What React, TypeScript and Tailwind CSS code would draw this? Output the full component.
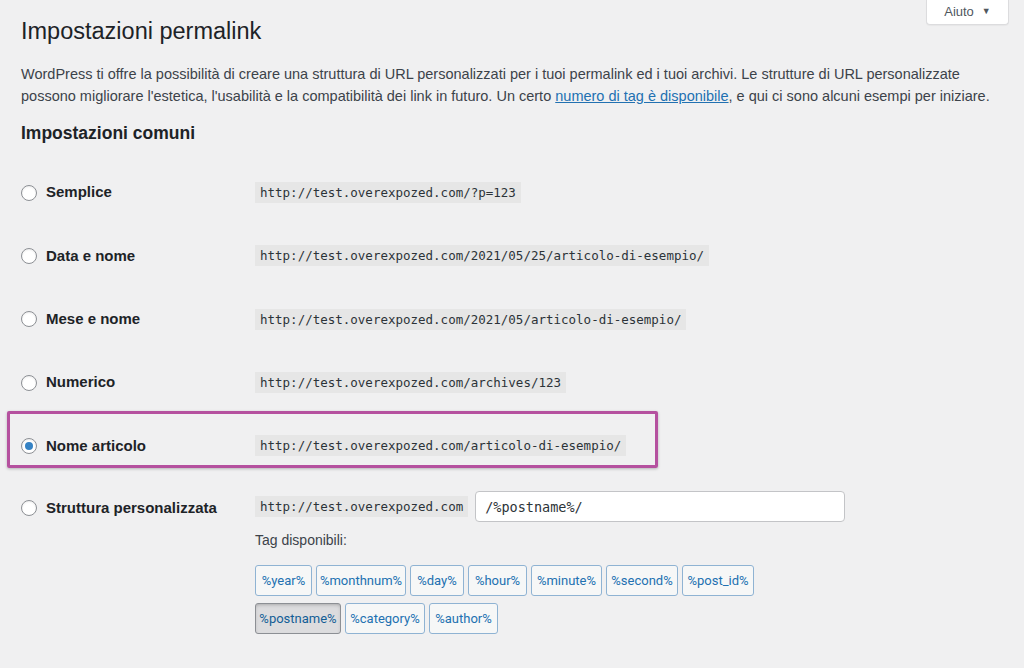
import React from "react";

const sans = { fontFamily: '"Liberation Sans", Arial, sans-serif' };

function Radio({ checked }: { checked?: boolean }) {
  return (
    <span className="flex h-[16px] w-[16px] shrink-0 items-center justify-center rounded-full border border-[#8c8f94] bg-white shadow-[inset_0_1px_2px_rgba(0,0,0,0.08)]">
      {checked && <span className="h-[8px] w-[8px] rounded-full bg-[#3582c4]" />}
    </span>
  );
}

function Code({ children }: { children: React.ReactNode }) {
  return (
    <code className="bg-[#e6e6e6] px-[5px] py-[2px] font-['DejaVu_Sans_Mono',monospace] text-[12.5px] leading-[17px] text-[#2c3338]">
      {children}
    </code>
  );
}

function Row({
  label,
  url,
  checked,
  highlight,
}: {
  label: string;
  url: string;
  checked?: boolean;
  highlight?: boolean;
}) {
  return (
    <div className="relative flex h-[63.3px] items-center">
      {highlight && (
        <div className="pointer-events-none absolute left-[-14px] top-[-3px] h-[57px] w-[651px] rounded-[2px] border-[3px] border-[#b5519f] shadow-[0_1px_3px_rgba(0,0,0,0.25)]" />
      )}
      <div className="flex w-[234px] items-center gap-[9px]">
        <Radio checked={checked} />
        <span className="text-[15px] font-bold text-[#1d2327]">{label}</span>
      </div>
      <Code>{url}</Code>
    </div>
  );
}

const tags1: [string, string][] = [
  ["%year%", "w-[57px]"],
  ["%monthnum%", "w-[90px]"],
  ["%day%", "w-[54px]"],
  ["%hour%", "w-[59px]"],
  ["%minute%", "w-[71px]"],
  ["%second%", "w-[72px]"],
  ["%post_id%", "w-[72px]"],
];
const tags2: [string, string][] = [
  ["%postname%", "w-[86px]"],
  ["%category%", "w-[80px]"],
  ["%author%", "w-[69px]"],
];

function Tag({ t, w, pressed }: { t: string; w: string; pressed?: boolean }) {
  return (
    <span
      className={`flex h-[31px] items-center justify-center rounded-[3px] border font-['Roboto',sans-serif] text-[13px] ${w} ${
        pressed
          ? "border-[#8c8f94] bg-[#dcdcde] text-[#135e96] shadow-[inset_0_2px_5px_-3px_rgba(0,0,0,0.5)]"
          : "border-[#8fb3d3] bg-[#f6f7f7] text-[#2271b1]"
      }`}
    >
      {t}
    </span>
  );
}

export default function App() {
  return (
    <div className="min-h-[668px] w-[1024px] bg-[#f0f0f1] text-[#1d2327]" style={sans}>
      <div className="flex items-start justify-between pl-[21px] pr-[15px]">
        <h1 className="pt-[17px] text-[23.5px] font-normal leading-[29px] text-[#1d2327]">
          Impostazioni permalink
        </h1>
        <div className="flex h-[25px] w-[83px] items-center justify-center gap-[8px] rounded-b-[4px] border border-t-0 border-[#dcdcde] bg-white text-[13px] text-[#50575e] shadow-[0_1px_1px_rgba(0,0,0,0.04)]">
          <span>Aiuto</span>
          <span className="text-[9px]">▼</span>
        </div>
      </div>
      <div className="px-[21px]">
        <p className="mt-[17px] whitespace-nowrap text-[14.5px] leading-[22px] text-[#3c434a]">
          WordPress ti offre la possibilità di creare una struttura di URL personalizzati per i tuoi permalink ed i tuoi archivi. Le strutture di URL personalizzate
          <br />
          possono migliorare l'estetica, l'usabilità e la compatibilità dei link in futuro. Un certo{" "}
          <a className="text-[#2271b1] underline">numero di tag è disponibile</a>, e qui ci sono alcuni esempi per iniziare.
        </p>
        <h2 className="mt-[15px] text-[17.5px] font-bold leading-[22px] text-[#1d2327]">Impostazioni comuni</h2>
        <div className="mt-[17px] flex flex-col">
          <Row label="Semplice" url="http://test.overexpozed.com/?p=123" />
          <Row label="Data e nome" url="http://test.overexpozed.com/2021/05/25/articolo-di-esempio/" />
          <Row label="Mese e nome" url="http://test.overexpozed.com/2021/05/articolo-di-esempio/" />
          <Row label="Numerico" url="http://test.overexpozed.com/archives/123" />
          <Row label="Nome articolo" url="http://test.overexpozed.com/articolo-di-esempio/" checked highlight />
        </div>
        <div className="flex items-start pt-[14px]">
          <div className="flex h-[33px] w-[234px] items-center gap-[9px]">
            <Radio />
            <span className="text-[15px] font-bold text-[#1d2327]">Struttura personalizzata</span>
          </div>
          <div className="flex flex-col">
            <div className="flex items-center gap-[7px]">
              <Code>http://test.overexpozed.com</Code>
              <div className="flex h-[31px] w-[370px] items-center rounded-[4px] border border-[#c3c4c7] bg-white px-[9px] font-['DejaVu_Sans_Mono',monospace] text-[13.5px] text-[#2c3338]">
                /%postname%/
              </div>
            </div>
            <div className="mt-[8px] text-[14px] leading-[20px] text-[#3c434a]">Tag disponibili:</div>
            <div className="mt-[15px] flex flex-col gap-[7px]">
              <div className="flex gap-[4px]">
                {tags1.map(([t, w]) => (
                  <Tag key={t} t={t} w={w} />
                ))}
              </div>
              <div className="flex gap-[4px]">
                {tags2.map(([t, w], i) => (
                  <Tag key={t} t={t} w={w} pressed={i === 0} />
                ))}
              </div>
            </div>
          </div>
        </div>
      </div>
    </div>
  );
}
